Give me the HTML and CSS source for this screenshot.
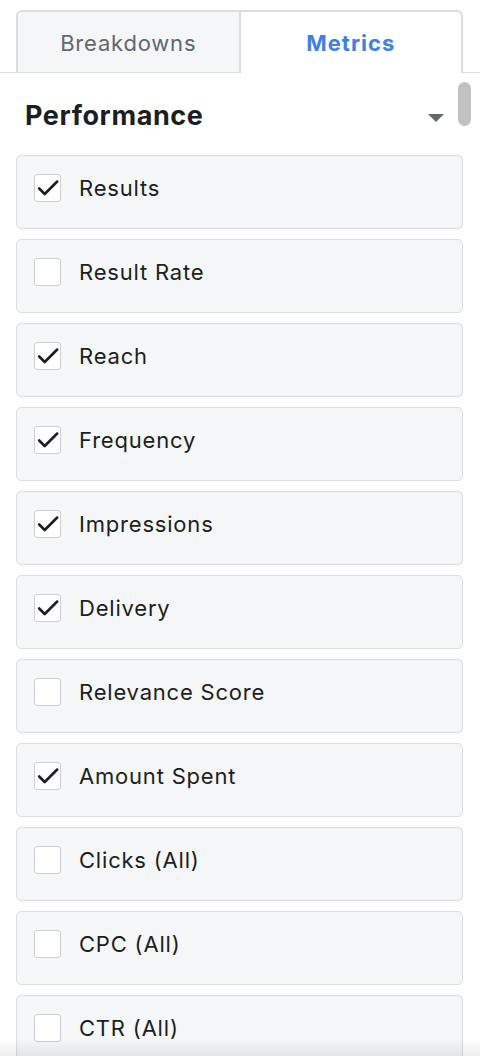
FILE: index.html
```html
<!DOCTYPE html>
<html>
<head>
<meta charset="utf-8">
<link rel="stylesheet" href="styles.css">
</head>
<body>
<div class="panel">
  <div class="tabs">
    <div class="tab tab-inactive">Breakdowns</div>
    <div class="tab tab-active">Metrics</div>
  </div>
  <div class="content">
    <div class="scrollbar"></div>
    <div class="section-head">
      <h2 class="section-title">Performance</h2>
      <span class="caret"></span>
    </div>
    <ul class="list">
      <li class="item"><span class="box checked"><svg viewBox="0 0 27 27"><path d="M4.5 14 L10.5 20 L24 6.5" /></svg></span><span class="label">Results</span></li>
      <li class="item"><span class="box"></span><span class="label">Result Rate</span></li>
      <li class="item"><span class="box checked"><svg viewBox="0 0 27 27"><path d="M4.5 14 L10.5 20 L24 6.5" /></svg></span><span class="label">Reach</span></li>
      <li class="item"><span class="box checked"><svg viewBox="0 0 27 27"><path d="M4.5 14 L10.5 20 L24 6.5" /></svg></span><span class="label">Frequency</span></li>
      <li class="item"><span class="box checked"><svg viewBox="0 0 27 27"><path d="M4.5 14 L10.5 20 L24 6.5" /></svg></span><span class="label">Impressions</span></li>
      <li class="item"><span class="box checked"><svg viewBox="0 0 27 27"><path d="M4.5 14 L10.5 20 L24 6.5" /></svg></span><span class="label">Delivery</span></li>
      <li class="item"><span class="box"></span><span class="label">Relevance Score</span></li>
      <li class="item"><span class="box checked"><svg viewBox="0 0 27 27"><path d="M4.5 14 L10.5 20 L24 6.5" /></svg></span><span class="label">Amount Spent</span></li>
      <li class="item"><span class="box"></span><span class="label">Clicks (All)</span></li>
      <li class="item"><span class="box"></span><span class="label">CPC (All)</span></li>
      <li class="item"><span class="box"></span><span class="label">CTR (All)</span></li>
    </ul>
  </div>
  <div class="fade"></div>
</div>
</body>
</html>
```

FILE: styles.css
```css
html, body {
  margin: 0;
  padding: 0;
  background: #ffffff;
}
body {
  font-family: "Inter", "Liberation Sans", sans-serif;
  color: #1c1e21;
  height: 1056px;
  overflow: hidden;
}
.panel {
  position: relative;
  width: 480px;
  height: 1056px;
  overflow: hidden;
}
.tabs {
  display: flex;
  padding: 10px 17px 0 16px;
  border-bottom: 1px solid #dadde1;
}
.tab {
  flex: 1;
  box-sizing: border-box;
  height: 62px;
  display: flex;
  align-items: center;
  justify-content: center;
  padding-top: 2px;
  font-size: 22px;
  letter-spacing: 0.8px;
  border-top: 2px solid #dadde1;
}
.tab-inactive {
  background: #f5f6f7;
  color: #606770;
  border-left: 2px solid #dadde1;
  border-right: 2px solid #dadde1;
  border-top-left-radius: 6px;
}
.tab-active {
  background: #ffffff;
  color: #4080e0;
  font-weight: 700;
  letter-spacing: 1px;
  border-right: 2px solid #dadde1;
  border-top-right-radius: 6px;
  margin-bottom: -1px;
  height: 63px;
  padding-bottom: 1px;
}
.content {
  position: relative;
}
.scrollbar {
  position: absolute;
  top: 9px;
  left: 458px;
  width: 13px;
  height: 44px;
  border-radius: 7px;
  background: #c1c1c1;
}
.section-head {
  display: flex;
  align-items: center;
  justify-content: space-between;
  padding: 28px 36px 24px 25px;
}
.section-title {
  margin: 0;
  font-size: 27px;
  line-height: 30px;
  font-weight: 700;
  letter-spacing: 0.6px;
  color: #1c1e21;
}
.caret {
  width: 0;
  height: 0;
  border-left: 8px solid transparent;
  border-right: 8px solid transparent;
  border-top: 8px solid #606770;
  margin-top: 4px;
}
.list {
  list-style: none;
  margin: 0;
  padding: 0 17px 0 16px;
  display: flex;
  flex-direction: column;
  gap: 10px;
}
.item {
  box-sizing: border-box;
  height: 74px;
  display: flex;
  padding: 18px 17px 0;
  align-items: flex-start;
  background: #f5f6f7;
  border: 1px solid #dadde1;
  border-radius: 5px;
}
.box {
  box-sizing: border-box;
  flex: none;
  width: 27px;
  height: 28px;
  background: #ffffff;
  border: 1px solid #ccd0d5;
  border-radius: 3px;
  display: flex;
}
.box svg {
  width: 25px;
  height: 26px;
  fill: none;
  stroke: #1c1e21;
  stroke-width: 2.8;
  stroke-linecap: round;
  stroke-linejoin: round;
}
.label {
  margin-left: 18px;
  font-size: 22px;
  line-height: 28px;
  letter-spacing: 0.8px;
  color: #1c1e21;
}
.fade {
  position: absolute;
  left: 0;
  right: 0;
  bottom: 0;
  height: 18px;
  background: linear-gradient(to bottom, rgba(0,0,0,0), rgba(0,0,0,0.07));
}
```
